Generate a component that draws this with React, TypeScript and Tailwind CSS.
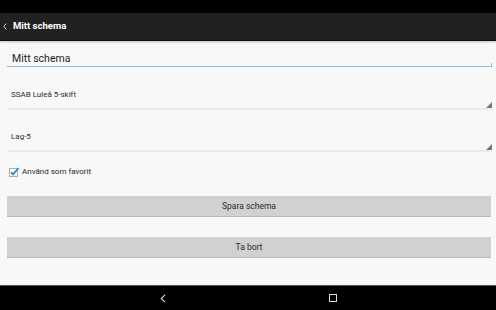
import React from "react";

function Spinner({ label }: { label: string }) {
    return (
        <div className="relative border-b-2 border-[#ebebeb] pb-[6px]">
            <div className="h-[14px] flex items-center pl-[4px] text-[8px] text-[#2e2e2e]">{label}</div>
            <div className="absolute right-0 bottom-0 w-0 h-0 border-l-[6px] border-l-transparent border-b-[6px] border-b-[#777]" />
        </div>
    );
}

function Button({ label, className }: { label: string; className?: string }) {
    return (
        <button
            type="button"
            className={`w-full h-[21px] flex items-center justify-center bg-[#d1d1d1] border-b-[1.5px] border-[#b8b8b8] text-[8.5px] text-[#2a2a2a] ${className ?? ""}`}
        >
            {label}
        </button>
    );
}

export default function App() {
    return (
        <div className="w-[496px] h-[310px] flex flex-col bg-[#f8f8f8] font-['Roboto',sans-serif] overflow-hidden">
            <div className="h-[13px] bg-black" />
            <div className="h-[28px] bg-[#212121] flex items-center border-b border-[#111] shadow-[0_1px_2px_rgba(0,0,0,0.25)]">
                <svg width="4" height="7" viewBox="0 0 4 7" className="ml-[3px]">
                    <path d="M3.3 0.5 L0.8 3.5 L3.3 6.5" fill="none" stroke="#cfcfcf" strokeWidth="1" />
                </svg>
                <span className="ml-[6px] text-[9.5px] font-bold text-white">Mitt schema</span>
            </div>

            <div className="flex-1 px-[7px] pr-[4px] flex flex-col">
                <div className="mt-[11px] h-[15px] flex items-center pl-[5px] text-[10.5px] text-[#1e1e1e] border-b border-[#8fbcd1] relative">
                    Mitt schema
                    <div className="absolute right-0 bottom-0 w-[1px] h-[3px] bg-[#8fbcd1]" />
                </div>

                <div className="mt-[21px]">
                    <Spinner label="SSAB Luleå 5-skift" />
                </div>
                <div className="mt-[20px]">
                    <Spinner label="Lag-5" />
                </div>

                <div className="mt-[15px] h-[10px] flex items-center">
                    <svg width="11" height="10" viewBox="0 0 11 10" className="ml-[2px]">
                        <rect x="0.5" y="1.5" width="8" height="8" fill="#fff" stroke="#9a9a9a" strokeWidth="0.8" />
                        <path d="M2 5.2 L4 7.4 L9.6 1" fill="none" stroke="#2a8ccf" strokeWidth="1.8" />
                    </svg>
                    <span className="ml-[2px] text-[8px] text-[#2a2a2a]">Använd som favorit</span>
                </div>

                <div className="mt-[19px] pr-[1px]">
                    <Button label="Spara schema" />
                </div>
                <div className="mt-[20px] pr-[1px]">
                    <Button label="Ta bort" />
                </div>
            </div>

            <div className="h-[25px] bg-black border-t border-[#555] flex items-center">
                <svg width="6" height="9" viewBox="0 0 6 9" className="ml-[160px]">
                    <path d="M5 0.8 L1.2 4.5 L5 8.2" fill="none" stroke="#e0e0e0" strokeWidth="1.1" />
                </svg>
                <div className="ml-[163px] w-[8px] h-[8px] border-[1.3px] border-[#e0e0e0]" />
            </div>
        </div>
    );
}
